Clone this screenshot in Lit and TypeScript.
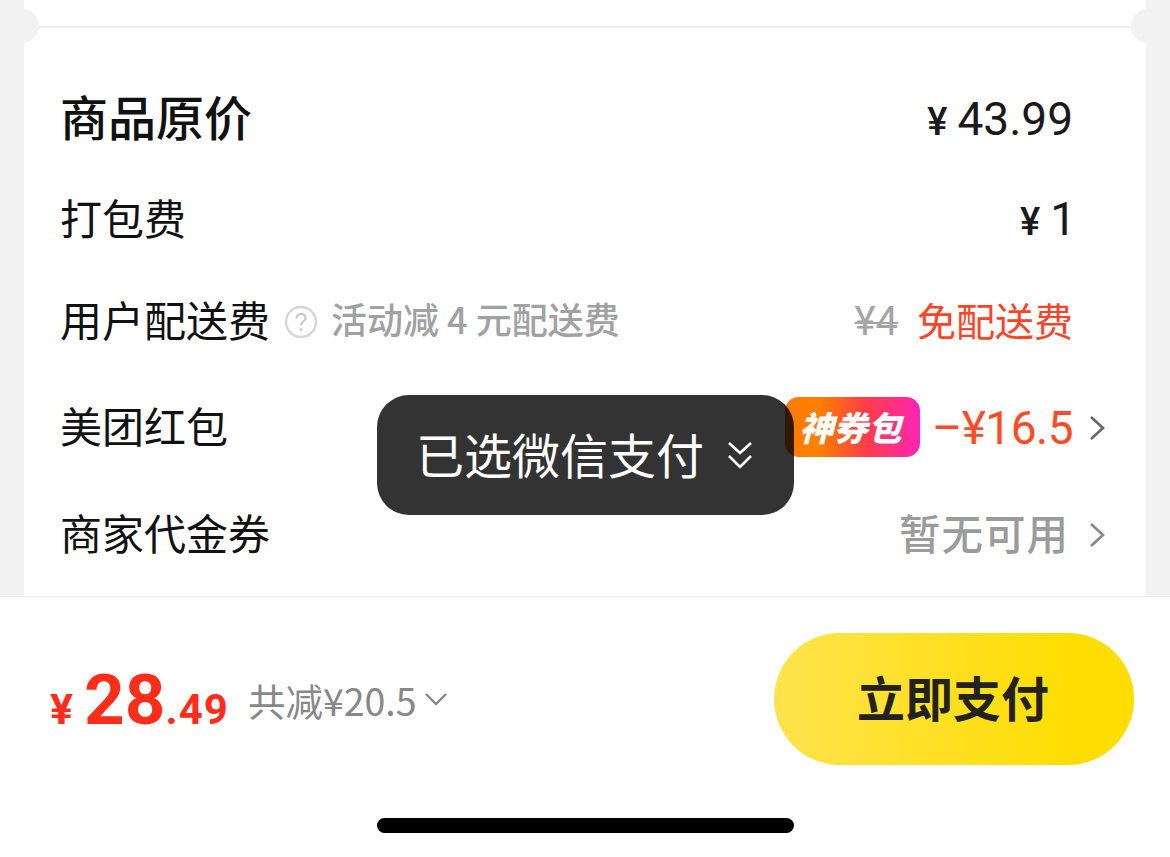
import { LitElement, html, css } from 'lit';
import { customElement } from 'lit/decorators.js';

const chevron = html`<svg class="chevron" viewBox="0 0 16 26" fill="none">
  <path d="M2 2l12 11L2 24" stroke="currentColor" stroke-width="2.6" />
</svg>`;

@customElement('app-root')
export class AppRoot extends LitElement {
  static override styles = css`
    :host {
      display: flex;
      flex-direction: column;
      position: relative;
      width: 1170px;
      height: 857px;
      overflow: hidden;
      background: #f2f2f2;
      font-family: 'Noto Sans CJK SC', 'Noto Sans', sans-serif;
      color: #111;
    }

    .card {
      position: relative;
      flex: 1;
      min-height: 0;
      margin: 0 24px;
      padding: 0 73px 0 36px;
      background: #fff;
    }

    .divider {
      height: 2px;
      margin: 26px -73px 0 -36px;
      background: #efefef;
    }

    .notch {
      position: absolute;
      top: 9px;
      width: 34px;
      height: 34px;
      border-radius: 50%;
      background: #f2f2f2;
    }

    .notch.left {
      left: -19px;
    }

    .notch.right {
      right: -19px;
    }

    .row {
      display: flex;
      align-items: center;
      justify-content: space-between;
      height: 60px;
      font-size: 42px;
      line-height: 60px;
      white-space: nowrap;
    }

    .row.first {
      margin-top: 60px;
    }

    .row.second,
    .row.third {
      margin-top: 42px;
    }

    .row.fourth {
      margin-top: 46px;
    }

    .row.fifth {
      margin-top: 47px;
    }

    .label {
      padding-bottom: 6px;
    }

    .row.first .label {
      font-size: 48px;
      font-weight: 500;
    }

    .left-group,
    .right-group {
      display: flex;
      align-items: center;
    }

    .amount {
      padding-top: 4px;
      font-family: Roboto, Inter, sans-serif;
      font-size: 46px;
      font-weight: 400;
      color: #1a1a1a;
    }

    .row.second .amount {
      margin-right: -3px;
      padding-top: 0;
    }

    .yen {
      font-size: 38px;
      font-weight: 500;
      margin-right: 10px;
    }

    .help {
      width: 34px;
      height: 34px;
      margin: 0 13px 0 14px;
    }

    .note {
      padding-bottom: 8px;
      font-size: 36px;
      font-weight: 500;
      color: #a1a1a1;
    }

    .old {
      font-family: Roboto, sans-serif;
      font-size: 40px;
      color: #a4a4a4;
      text-decoration: line-through;
      text-decoration-thickness: 2px;
      margin-right: 19px;
    }

    .free {
      padding-bottom: 6px;
      font-size: 39px;
      color: #ff4326;
    }

    .coupon {
      display: flex;
      align-items: center;
      justify-content: center;
      width: 135px;
      height: 60px;
      margin: -2px 12px 0 0;
      padding-right: 4px;
      box-sizing: border-box;
      border-radius: 14px;
      background: linear-gradient(90deg, #ff7a00, #ff8000 25%, #ff3d4a 60%, #ff25b4);
      color: #fff;
      font-size: 34px;
      font-weight: 900;
      font-style: italic;
      line-height: 60px;
    }

    .discount {
      font-family: Roboto, Inter, sans-serif;
      font-size: 46px;
      letter-spacing: -0.5px;
      color: #ff4b26;
    }

    .none {
      margin-right: 2px;
      padding-bottom: 6px;
      font-size: 41.5px;
      font-weight: 500;
      letter-spacing: 1px;
      color: #9b9b9b;
    }

    .chevron {
      width: 16px;
      height: 26px;
      margin: 0 -32px 0 16px;
      color: #666;
    }

    .none + .chevron {
      margin-left: 18px;
      color: #888;
    }

    .toast {
      position: absolute;
      left: 377px;
      top: 395px;
      display: flex;
      align-items: center;
      width: 417px;
      height: 120px;
      padding-left: 39px;
      box-sizing: border-box;
      border-radius: 32px;
      background: rgba(0, 0, 0, 0.8);
      color: #fff;
      font-size: 48px;
      white-space: nowrap;
    }

    .toast span {
      padding-bottom: 4px;
    }

    .toast svg {
      width: 28px;
      height: 30px;
      margin-left: 22px;
    }

    .footer {
      display: flex;
      flex-direction: column;
      align-items: center;
      height: 260px;
      border-top: 1px solid #ececec;
      background: #fff;
    }

    .bar {
      display: flex;
      align-items: center;
      justify-content: space-between;
      align-self: stretch;
      height: 132px;
      margin-top: 36px;
      padding: 0 36px 0 50px;
    }

    .price {
      display: flex;
      align-items: baseline;
      font-family: Roboto, Inter, sans-serif;
      font-weight: 700;
      color: #ff2d19;
      white-space: nowrap;
    }

    .price .sign {
      font-size: 43px;
      margin-right: 11px;
    }

    .price .big {
      font-size: 71px;
    }

    .price .small {
      font-size: 42px;
      letter-spacing: 1px;
    }

    .saved {
      display: flex;
      align-items: center;
      margin-left: 19px;
      font-size: 37.5px;
      color: #888;
      white-space: nowrap;
    }

    .saved svg {
      width: 24px;
      height: 16px;
      margin-left: 7px;
    }

    .price-group {
      display: flex;
      align-items: center;
    }

    .pay {
      display: flex;
      align-items: center;
      justify-content: center;
      width: 360px;
      height: 132px;
      padding: 0 2px 6px 0;
      box-sizing: border-box;
      border-radius: 66px;
      background: linear-gradient(90deg, #ffe34d, #ffdd00 85%);
      color: #222;
      font-size: 48px;
      font-weight: 700;
    }

    .home {
      width: 417px;
      height: 15px;
      margin-top: 53px;
      border-radius: 8px;
      background: #000;
    }
  `;

  override render() {
    return html`
      <section class="card">
        <div class="notch left"></div>
        <div class="notch right"></div>
        <div class="divider"></div>

        <div class="row first">
          <span class="label">商品原价</span>
          <span class="amount"><span class="yen">¥</span>43.99</span>
        </div>
        <div class="row second">
          <span class="label">打包费</span>
          <span class="amount"><span class="yen">¥</span>1</span>
        </div>
        <div class="row third">
          <div class="left-group">
            <span class="label">用户配送费</span>
            <svg class="help" viewBox="0 0 34 34" fill="none">
              <circle cx="17" cy="17" r="15" stroke="#d6d6d6" stroke-width="2.4" />
              <path
                d="M12.5 13.5c0-2.8 2-4.5 4.6-4.5s4.5 1.7 4.5 4c0 3.4-4.6 3.6-4.6 7.2"
                stroke="#c8c8c8"
                stroke-width="2.2"
              />
              <circle cx="17" cy="24.5" r="1.5" fill="#c8c8c8" />
            </svg>
            <span class="note">活动减 4 元配送费</span>
          </div>
          <div class="right-group">
            <span class="old">¥4</span>
            <span class="free">免配送费</span>
          </div>
        </div>
        <div class="row fourth">
          <span class="label">美团红包</span>
          <div class="right-group">
            <span class="coupon">神券包</span>
            <span class="discount">–¥16.5</span>
            ${chevron}
          </div>
        </div>
        <div class="row fifth">
          <span class="label">商家代金券</span>
          <div class="right-group">
            <span class="none">暂无可用</span>
            ${chevron}
          </div>
        </div>
      </section>

      <footer class="footer">
        <div class="bar">
          <div class="price-group">
            <div class="price">
              <span class="sign">¥</span>
              <span class="big">28</span>
              <span class="small">.49</span>
            </div>
            <div class="saved">
              <span>共减¥20.5</span>
              <svg viewBox="0 0 24 16" fill="none">
                <path d="M2 3l10 10L22 3" stroke="#888" stroke-width="2.4" />
              </svg>
            </div>
          </div>
          <div class="pay">立即支付</div>
        </div>
        <div class="home"></div>
      </footer>

      <div class="toast">
        <span>已选微信支付</span>
        <svg viewBox="0 0 28 30" fill="none">
          <path d="M3 3l11 10L25 3M3 16l11 11 11-11" stroke="#fff" stroke-width="2.6" />
        </svg>
      </div>
    `;
  }
}

declare global {
  interface HTMLElementTagNameMap {
    'app-root': AppRoot;
  }
}
